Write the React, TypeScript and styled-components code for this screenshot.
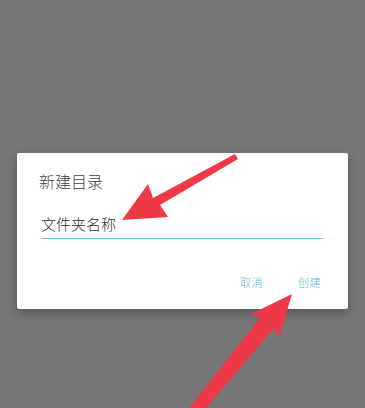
import { createGlobalStyle, styled } from 'styled-components';

const GlobalStyle = createGlobalStyle`
  html, body {
    margin: 0;
    padding: 0;
    background: #777777;
    font-family: Roboto, "Noto Sans CJK SC", sans-serif;
  }
`;

const Screen = styled.div`
  position: relative;
  width: 365px;
  height: 408px;
  overflow: hidden;
  background: #777777;
  padding: 153px 17px 0 17px;
  box-sizing: border-box;
`;

const Dialog = styled.div`
  width: 331px;
  height: 156px;
  box-sizing: border-box;
  background: #ffffff;
  border-radius: 2px;
  box-shadow: 0 4px 10px rgba(0, 0, 0, 0.28);
  padding: 20px 25px 0 22px;
  display: flex;
  flex-direction: column;
`;

const Title = styled.div`
  font-size: 16px;
  line-height: 20px;
  font-weight: 300;
  color: #404040;
`;

const Field = styled.div`
  margin: 23px 0 0 2px;
  border-bottom: 1.6px solid #6cc2d9;
  padding-bottom: 4px;
`;

const FieldText = styled.div`
  font-size: 15px;
  line-height: 18px;
  font-weight: 300;
  color: #2e2e2e;
`;

const Actions = styled.div`
  margin-top: 38px;
  display: flex;
  justify-content: flex-end;
  gap: 35px;
  padding-right: 2px;
`;

const ActionButton = styled.div`
  font-size: 11px;
  line-height: 14px;
  font-weight: 300;
  color: #5db6d6;
  letter-spacing: 0.5px;
`;

const Overlay = styled.svg`
  position: absolute;
  left: 0;
  top: 0;
  pointer-events: none;
`;

export default function App() {
  return (
    <>
      <GlobalStyle />
      <Screen>
        <Dialog>
          <Title>新建目录</Title>
          <Field>
            <FieldText>文件夹名称</FieldText>
          </Field>
          <Actions>
            <ActionButton>取消</ActionButton>
            <ActionButton>创建</ActionButton>
          </Actions>
        </Dialog>
        <Overlay width="365" height="408" viewBox="0 0 365 408">
          <polygon
            points="122,220 148,184 153,198 235,154 238,159 160,205 168,217"
            fill="#ee3a47"
            strokeLinejoin="round"
          />
          <polygon
            points="292,294 279,338 274,328 206,408 189,408 260,318 251,314"
            fill="#ee3a47"
            strokeLinejoin="round"
          />
        </Overlay>
      </Screen>
    </>
  );
}
